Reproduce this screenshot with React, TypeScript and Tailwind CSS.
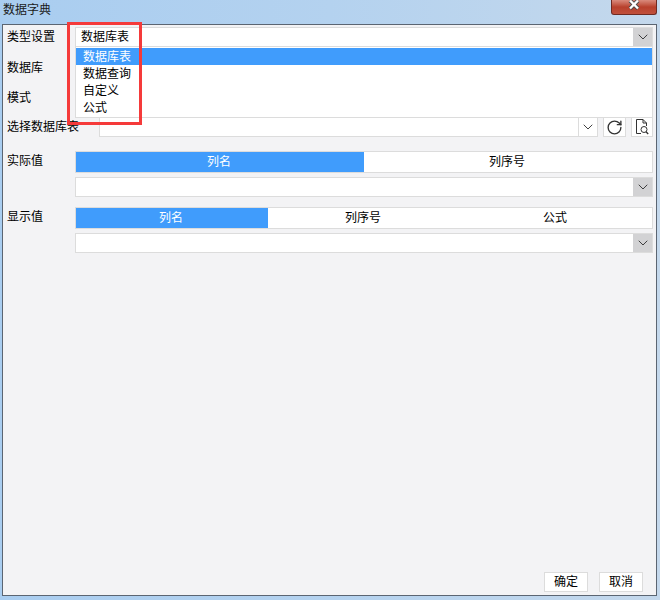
import React from 'react';
import { ChevronDown, RotateCw } from 'lucide-react';

function Arrow() {
  return <ChevronDown size={16} strokeWidth={1.4} className="text-[#333]" />;
}

function SelectBox({ grayArrow = true }: { grayArrow?: boolean }) {
  return (
    <div className="flex h-5 flex-1 border border-[#dcdcdc] bg-white">
      <div className="flex-1" />
      <div
        className={`flex w-[19px] items-center justify-center ${
          grayArrow ? 'bg-[#d2d2d4]' : 'border-l border-[#dcdcdc] bg-white'
        }`}
      >
        <Arrow />
      </div>
    </div>
  );
}

function Tabs({ items, widthClass }: { items: string[]; widthClass: string }) {
  return (
    <div className="flex h-[22px] border border-[#dcdcdc] bg-white">
      {items.map((item, index) => (
        <div
          key={item}
          className={`flex items-center justify-center pr-0.5 ${widthClass} ${
            index === 0 ? 'bg-[#409cfc] text-white' : 'text-black'
          }`}
        >
          {item}
        </div>
      ))}
    </div>
  );
}

export default function App() {
  const options = ['数据库表', '数据查询', '自定义', '公式'];

  return (
    <div className="relative flex h-[600px] w-[660px] flex-col overflow-hidden bg-gradient-to-r from-[#a9cdf0] via-[#b4d2ef] to-[#c4d8ec] font-['Liberation_Sans','Noto_Sans_CJK_SC',sans-serif] text-xs leading-none text-black">
      <div className="relative flex h-6 shrink-0 items-center pl-[3px] pb-[4px] text-[#1a1a1a]">
        数据字典
        <div className="absolute top-0 right-[3px] flex h-[15px] w-[46px] items-start justify-center rounded-b-[3px] border border-t-0 border-[#6e2a22] bg-gradient-to-b from-[#d98a7c] via-[#b8402c] to-[#c0503c]">
          <svg width="14" height="10" viewBox="0 0 14 10">
            <path d="M3 0.5 L11 8.5 M11 0.5 L3 8.5" stroke="#4a4a4a" strokeWidth="4" fill="none" />
            <path d="M3 0.5 L11 8.5 M11 0.5 L3 8.5" stroke="#ffffff" strokeWidth="2.4" fill="none" />
          </svg>
        </div>
      </div>

      <div className="mr-[3px] mb-1 ml-0.5 flex flex-1 flex-col border border-[#5b6572] bg-[#f3f3f5] pr-[3px] pl-1">
        <div className="mt-0.5 flex items-center">
          <div className="w-[68px] shrink-0">类型设置</div>
          <div className="flex h-5 flex-1 border border-[#dcdcdc] bg-white">
            <div className="flex flex-1 items-center pl-[5px]">数据库表</div>
            <div className="flex w-[19px] items-center justify-center bg-[#d2d2d4]">
              <Arrow />
            </div>
          </div>
        </div>

        <div className="mt-[11px] flex h-5 items-center">
          <div className="w-[68px] shrink-0">数据库</div>
        </div>
        <div className="mt-2.5 flex h-5 items-center">
          <div className="w-[68px] shrink-0">模式</div>
        </div>

        <div className="mt-[9px] flex items-center">
          <div className="w-[92px] shrink-0">选择数据库表</div>
          <SelectBox grayArrow={false} />
          <div className="ml-[5px] flex h-5 w-[23px] items-center justify-center border border-[#dcdcdc] bg-white">
            <RotateCw size={17} strokeWidth={1.9} className="text-[#333]" />
          </div>
          <div className="ml-[5px] flex h-5 w-[22px] items-center justify-center border border-[#dcdcdc] bg-white">
            <svg width="14" height="16" viewBox="0 0 14 16" fill="none" stroke="#333" strokeWidth="1">
              <path d="M6 14.5 H1.5 V0.5 H8 L11.5 4 V7" />
              <path d="M8 0.5 V4 H11.5" />
              <circle cx="9" cy="10.5" r="3" />
              <path d="M11 12.8 L13.2 15" strokeWidth="1.4" />
            </svg>
          </div>
        </div>

        <div className="mt-3.5 flex">
          <div className="w-[68px] shrink-0 pt-1">实际值</div>
          <div className="flex-1">
            <Tabs items={['列名', '列序号']} widthClass="w-1/2" />
            <div className="mt-1 flex">
              <SelectBox />
            </div>
          </div>
        </div>

        <div className="mt-2.5 flex">
          <div className="w-[68px] shrink-0 pt-1">显示值</div>
          <div className="flex-1">
            <Tabs items={['列名', '列序号', '公式']} widthClass="w-1/3" />
            <div className="mt-1 flex">
              <SelectBox />
            </div>
          </div>
        </div>

        <div className="mt-auto mb-[3px] flex justify-end gap-[11px] pr-2.5">
          <div className="flex h-5 w-[44px] items-center justify-center border border-[#dcdcdc] bg-white">确定</div>
          <div className="flex h-5 w-[44px] items-center justify-center border border-[#dcdcdc] bg-white">取消</div>
        </div>
      </div>

      {/* open dropdown of the type select */}
      <div className="absolute top-[47px] left-[75px] h-[71px] w-[578px] border border-t-0 border-[#dcdcdc] bg-white pt-px">
        {options.map((option, index) => (
          <div
            key={option}
            className={`flex h-[17px] items-center pl-[7px] ${index === 0 ? 'bg-[#409cfc] text-white' : ''}`}
          >
            {option}
          </div>
        ))}
      </div>

      {/* red highlight frame */}
      <div className="absolute top-[22px] left-[67px] h-[103px] w-[75px] border-[3px] border-[#f53a3a]" />
    </div>
  );
}
